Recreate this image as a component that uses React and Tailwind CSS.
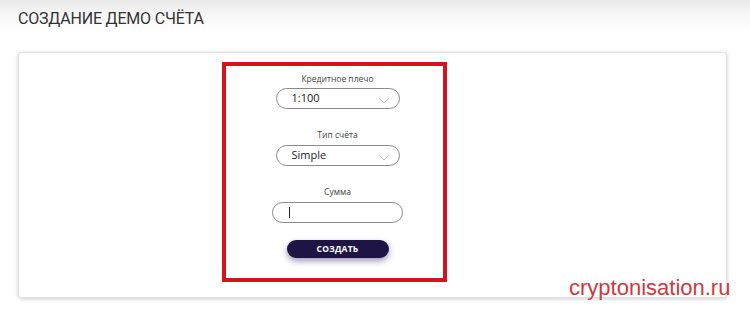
import React from "react";

function Chevron() {
  return (
    <svg width="10" height="6" viewBox="0 0 10 6" className="absolute right-[10px] top-[9px]">
      <path d="M0.5 0.5 L5 5 L9.5 0.5" fill="none" stroke="#bdbdbd" strokeWidth="1" />
    </svg>
  );
}

function SelectBox({ value }) {
  return (
    <div className="relative w-[124px] h-[21px] rounded-full border border-[#8a8a8a] bg-white flex items-center pl-[15px] text-[11px] text-[#222]">
      {value}
      <Chevron />
    </div>
  );
}

export default function App() {
  return (
    <div
      className="relative w-[750px] h-[309px] overflow-hidden bg-[linear-gradient(to_bottom,#e9e9e9_0px,#f6f6f6_14px,#ffffff_30px)]"
      style={{ fontFamily: "'Open Sans', 'Noto Sans', sans-serif" }}
    >
      <div className="pl-[18px] pt-[8px] h-[52px]">
        <div
          className="text-[16px] text-[#333] leading-[22px] tracking-[-0.2px]"
          style={{ fontFamily: "Roboto, 'Liberation Sans', sans-serif" }}
        >
          СОЗДАНИЕ ДЕМО СЧЁТА
        </div>
      </div>
      <div className="mx-[18px] mr-[23px] h-[246px] bg-white rounded-[3px] border border-[#e2e2e2] shadow-[0_1px_4px_rgba(0,0,0,0.2)] pt-[9px] pl-[203px]">
        <div className="w-[225px] h-[220px] border-[4px] border-[#d4141c] flex flex-col items-center pt-[6px] pl-[6px]">
          <div className="text-[8.5px] leading-[14px] text-[#444]">Кредитное плечо</div>
          <div className="mt-[2px]">
            <SelectBox value="1:100" />
          </div>
          <div className="mt-[19px] text-[8.5px] leading-[14px] text-[#444]">Тип счёта</div>
          <div className="mt-[3px]">
            <SelectBox value="Simple" />
          </div>
          <div className="mt-[19px] text-[8.5px] leading-[14px] text-[#444]">Сумма</div>
          <div className="mt-[3px] w-[131px] h-[21px] rounded-full border border-[#8a8a8a] bg-white flex items-center pl-[16px]">
            <span className="block w-[1px] h-[11px] bg-[#222]" />
          </div>
          <div className="mt-[17px] w-[102px] h-[18px] rounded-full bg-[#1e1545] shadow-[0_3px_6px_rgba(40,25,90,0.45)] flex items-center justify-center text-white text-[8.5px] font-bold tracking-[0.2px]">
            СОЗДАТЬ
          </div>
        </div>
      </div>
      <div
        className="absolute left-[569px] top-[275px] text-[22px] leading-[26px] text-[#cc3a40]"
        style={{ fontFamily: "'Liberation Sans', Arial, sans-serif" }}
      >
        cryptonisation.ru
      </div>
    </div>
  );
}
